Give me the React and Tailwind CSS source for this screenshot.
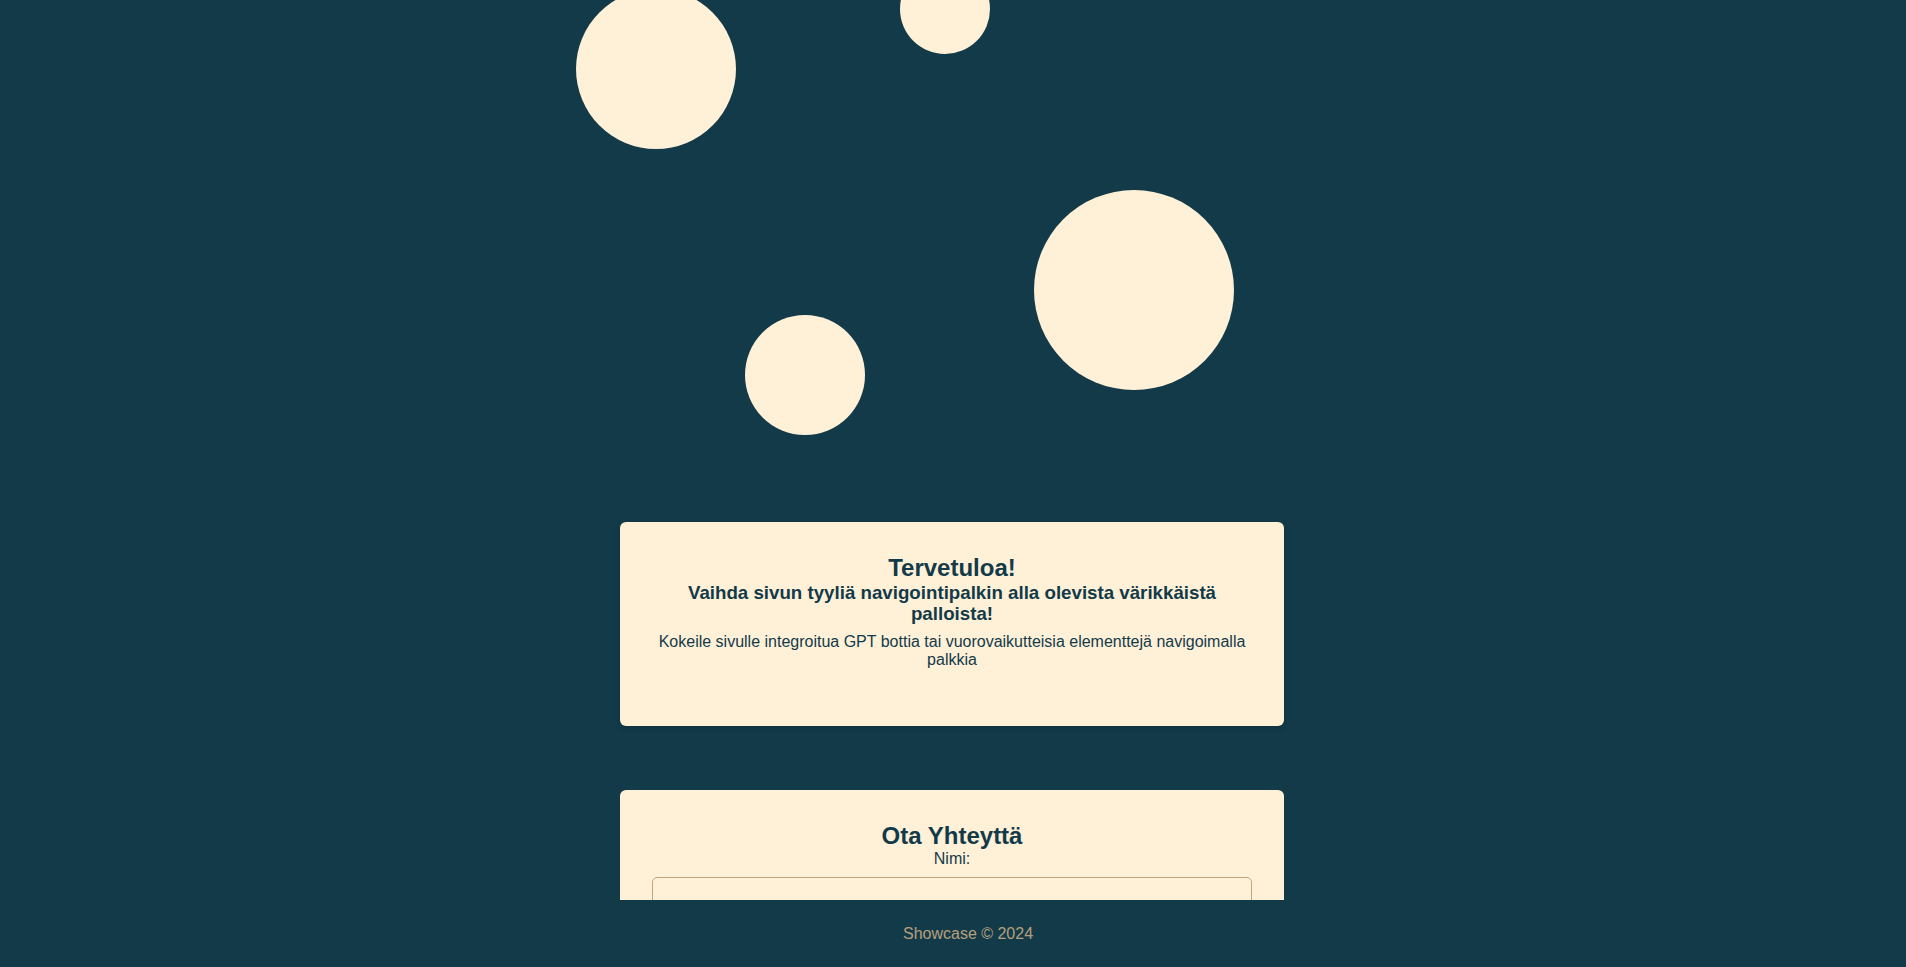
import React from "react";

export default function App() {
  return (
    <div
      className="h-[967px] w-full flex flex-col bg-[#133a48] text-[#133a48]"
      style={{ fontFamily: '"Liberation Sans", Arial, sans-serif' }}
    >
      <main className="flex-1 overflow-hidden flex flex-col">
        <div className="relative h-[522px] shrink-0">
          <div className="absolute left-[576px] top-[-11px] w-[160px] h-[160px] rounded-full bg-[#fff1d8]" />
          <div className="absolute left-[900px] top-[-36px] w-[90px] h-[90px] rounded-full bg-[#fff1d8]" />
          <div className="absolute left-[1034px] top-[190px] w-[200px] h-[200px] rounded-full bg-[#fff1d8]" />
          <div className="absolute left-[745px] top-[315px] w-[120px] h-[120px] rounded-full bg-[#fff1d8]" />
        </div>
        <div className="flex flex-col items-center gap-[64px] pr-[2px]">
          <section className="w-[664px] h-[204px] rounded-[6px] bg-[#fff1d8] p-8 text-center shadow-[0_2px_6px_rgba(0,0,0,0.15)]">
            <h2 className="text-[24px] font-bold leading-[27.6px]">Tervetuloa!</h2>
            <h3 className="text-[18.72px] font-bold leading-[21.5px]">
              Vaihda sivun tyyliä navigointipalkin alla olevista värikkäistä palloista!
            </h3>
            <p className="mt-[8px] text-[16px] leading-[18.4px]">
              Kokeile sivulle integroitua GPT bottia tai vuorovaikutteisia elementtejä navigoimalla palkkia
            </p>
          </section>
          <section className="w-[664px] h-[130px] rounded-t-[6px] bg-[#fff1d8] px-8 pt-8 text-center">
            <h2 className="text-[24px] font-bold leading-[27.6px]">Ota Yhteyttä</h2>
            <label className="block text-[16px] leading-[18.4px]">Nimi:</label>
            <input
              type="text"
              aria-label="Nimi"
              className="mt-[9px] block w-full h-[40px] rounded-[5px] border border-[#c3a57f] bg-[#fff1d8] px-2 outline-none"
            />
          </section>
        </div>
      </main>
      <footer className="h-[67px] shrink-0 flex items-center justify-center pl-[30px] text-[16px] text-[#b5a07e]">
        Showcase © 2024
      </footer>
    </div>
  );
}
